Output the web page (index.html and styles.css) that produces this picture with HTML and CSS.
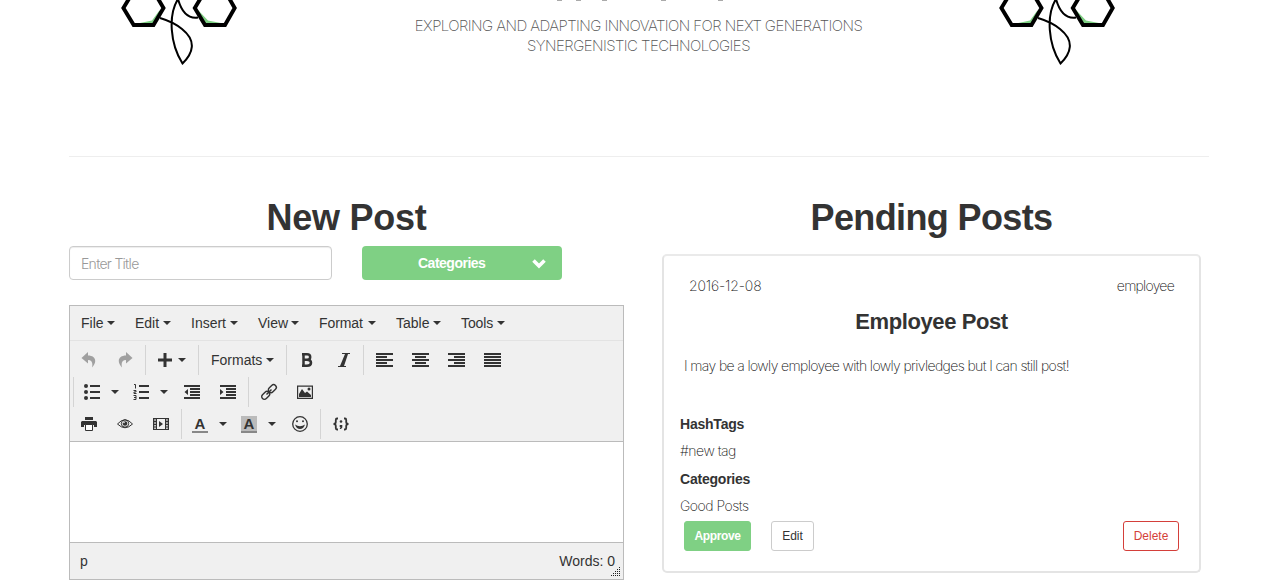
FILE: index.html
```html
<!DOCTYPE html>
<html lang="en">
<head>
<meta charset="utf-8">
<title>Posts</title>
<link rel="stylesheet" href="styles.css">
</head>
<body>
<svg width="0" height="0" class="defs">
  <symbol id="logo" viewBox="0 0 120 68">
    <path d="M15 24L32 20.500L39 11L43 9L33 25ZM106 24L88 20.500L78 10L74 9L84 25Z" fill="#7fd084"/>
    <path d="M3.400 8L13.700 -9H33.500L43.500 8L33.500 25H13.700ZM74.800 8L85 -9H105L114.700 8L105 25H85Z" fill="none" stroke="#000" stroke-width="3.900"/>
    <path d="M40 18C50 21 56 24 62 29C77 41 73 53 62.500 63.500C50 44 48 15 58 -1C61 10 67 19 78 17.500" fill="none" stroke="#000" stroke-width="2"/>
  </symbol>
</svg>
<div class="page">
  <header class="banner">
    <svg class="logo" width="120" height="68"><use href="#logo"/></svg>
    <div class="tagline">
      <svg class="title-edge" width="180" height="2"><path d="M8 .5h5M27 .5h5M53 .5h5M112 .5h5M169 .5h5" stroke="#aaa"/></svg>
      <p><span class="tag-a">EXPLORING AND ADAPTING INNOVATION FOR NEXT GENERATIONS</span><br><span class="tag-b">SYNERGENISTIC TECHNOLOGIES</span></p>
    </div>
    <svg class="logo" width="120" height="68"><use href="#logo"/></svg>
  </header>
  <main class="columns">
    <section class="new-post">
      <h2>New Post</h2>
      <div class="fields">
        <input class="title-input" type="text" placeholder="Enter Title">
        <button class="category"><span>Categories</span><svg width="14" height="10" viewBox="0 0 14 10"><path d="M1.500 1.500L7 7L12.500 1.500" fill="none" stroke="#fff" stroke-width="3.600"/></svg></button>
      </div>
      <div class="editor">
        <div class="menubar">
          <span class="menu m1">File<i class="caret"></i></span>
          <span class="menu m2">Edit<i class="caret"></i></span>
          <span class="menu m3">Insert<i class="caret"></i></span>
          <span class="menu m4">View<i class="caret"></i></span>
          <span class="menu m5">Format<i class="caret"></i></span>
          <span class="menu m6">Table<i class="caret"></i></span>
          <span class="menu m7">Tools<i class="caret"></i></span>
        </div>
        <div class="toolbar">
          <div class="row">
            <span class="btn off"><svg viewBox="0 0 16 16"><path d="M7 0L.5 6L7 11.500V8C11 8 12 11 11 15.500C17 9 14 3.500 7 3.500Z"/></svg></span>
            <span class="btn off"><svg viewBox="0 0 16 16"><path d="M9 0L15.500 6L9 11.500V8C5 8 4 11 5 15.500C-1 9 2 3.500 9 3.500Z"/></svg></span>
            <i class="sep"></i>
            <span class="btn split plus"><svg viewBox="0 0 16 16"><path d="M6.500 1h3v5.500H15v3H9.500V15h-3V9.500H1v-3h5.500z"/></svg><i class="caret"></i></span>
            <i class="sep"></i>
            <span class="btn formats">Formats<i class="caret"></i></span>
            <i class="sep"></i>
            <span class="btn"><svg viewBox="0 0 16 16"><path d="M4.500 2.200V13.800M3 2.200H8Q11.200 2.200 11.200 4.900T8 7.800H5M8 7.800Q12 7.800 12 10.800T8 13.800H3" fill="none" stroke="#333" stroke-width="2.500"/></svg></span>
            <span class="btn"><svg viewBox="0 0 16 16"><path d="M7 1h8v1h-2L9 14h2v1H3v-1h2L10 2H7z"/></svg></span>
            <i class="sep"></i>
            <span class="btn"><svg viewBox="0 0 17 16"><path d="M0 1h17v2H0zM0 4h11v2H0zM0 7h17v2H0zM0 10h11v2H0zM0 13h17v2H0z"/></svg></span>
            <span class="btn"><svg viewBox="0 0 17 16"><path d="M0 1h17v2H0zM3 4h11v2H3zM0 7h17v2H0zM3 10h11v2H3zM0 13h17v2H0z"/></svg></span>
            <span class="btn"><svg viewBox="0 0 17 16"><path d="M0 1h17v2H0zM6 4h11v2H6zM0 7h17v2H0zM6 10h11v2H6zM0 13h17v2H0z"/></svg></span>
            <span class="btn"><svg viewBox="0 0 17 16"><path d="M0 1h17v2H0zM0 4h17v2H0zM0 7h17v2H0zM0 10h17v2H0zM0 13h17v2H0z"/></svg></span>
          </div>
          <div class="row">
            <i class="sep"></i>
            <span class="btn split"><svg viewBox="0 0 16 16"><path d="M6 1h10v2H6zM6 7h10v2H6zM6 13h10v2H6z"/><circle cx="2" cy="2" r="2"/><circle cx="2" cy="8" r="2"/><circle cx="2" cy="14" r="2"/></svg><i class="caret"></i></span>
            <span class="btn split"><svg viewBox="0 0 16 16"><path d="M6 1h10v2H6zM6 7h10v2H6zM6 13h10v2H6z"/><path d="M1 .5h1.500V4.500M.5 6.500h2.500v1.500h-2v1.500H3.500M.5 11.500h2.500v4H.5M1 13.500h2" fill="none" stroke="#333"/></svg><i class="caret"></i></span>
            <span class="btn"><svg viewBox="0 0 16 16"><path d="M0 1h16v2H0zM6 4h10v2H6zM6 7h10v2H6zM6 10h10v2H6zM0 13h16v2H0zM4 5v6L.5 8z"/></svg></span>
            <span class="btn"><svg viewBox="0 0 16 16"><path d="M0 1h16v2H0zM6 4h10v2H6zM6 7h10v2H6zM6 10h10v2H6zM0 13h16v2H0zM0 5v6L3.500 8z"/></svg></span>
            <i class="sep"></i>
            <span class="btn"><svg viewBox="0 0 16 16"><g transform="rotate(-45 8 8)" fill="none" stroke="#333" stroke-width="1.400"><rect x="-1.200" y="5.300" width="9" height="5.400" rx="2.700"/><rect x="8.200" y="5.300" width="9" height="5.400" rx="2.700"/><path d="M4.500 8H11.500"/></g></svg></span>
            <span class="btn"><svg viewBox="0 0 16 16"><path d="M.6 2.100H15.400V14.400H.6Z" fill="none" stroke="#333" stroke-width="1.200"/><path d="M2 13V10L5 5L8 9L10 7.500L14 11V13Z"/><circle cx="12" cy="5" r="1.500"/></svg></span>
          </div>
          <div class="row">
            <span class="btn"><svg viewBox="0 0 16 16"><path d="M4 1h8v3H4zM1 5h14l1 1v5h-3V9H3v2H0V6z"/><path d="M4.500 8.500h7v6h-7z" fill="#fff" stroke="#333"/></svg></span>
            <span class="btn"><svg viewBox="0 0 16 16"><path d="M.5 8Q8 -.5 15.500 8Q8 15.500 .5 8Z" fill="none" stroke="#333"/><circle cx="8" cy="7.500" r="3.700" fill="none" stroke="#333"/><circle cx="8" cy="7.500" r="2.300"/><circle cx="7" cy="6.500" r=".8" fill="#eee"/></svg></span>
            <span class="btn"><svg viewBox="0 0 16 16"><path fill-rule="evenodd" d="M0 2h16v12H0zM1.300 3.300v1.500h1.500V3.300zM1.300 6.200v1.500h1.500V6.200zM1.300 9v1.500h1.500V9zM1.300 11.500V13h1.500v-1.500zM4 3v10h8V3zM13.200 3.300v1.500h1.500V3.300zM13.200 6.200v1.500h1.500V6.200zM13.200 9v1.500h1.500V9zM13.200 11.500V13h1.500v-1.500z"/><path d="M6 5v6l4-3z"/></svg></span>
            <i class="sep"></i>
            <span class="btn split"><b class="letter">A</b><i class="caret"></i></span>
            <span class="btn split"><b class="letter shade">A</b><i class="caret"></i></span>
            <span class="btn"><svg viewBox="0 0 16 16"><circle cx="8" cy="8" r="7.300" fill="none" stroke="#333" stroke-width="1.300"/><circle cx="5" cy="5.300" r="1"/><circle cx="11" cy="5.300" r="1"/><path d="M3 8.500Q8 12 13 8.500Q11.500 13 8 13T3 8.500Z"/></svg></span>
            <i class="sep"></i>
            <span class="btn"><svg viewBox="0 0 16 16"><path d="M5 2.500H4Q2.800 2.500 2.800 4V6Q2.800 8 .5 8Q2.800 8 2.800 10V12Q2.800 13.500 4 13.500H5M11 2.500h1Q13.200 2.500 13.200 4V6Q13.200 8 15.500 8Q13.200 8 13.200 10V12Q13.200 13.500 12 13.500H11" fill="none" stroke="#333" stroke-width="1.800"/><circle cx="8" cy="5.500" r="1.300"/><path d="M6.700 9h2.600v2.500L8 13H6.700L7.500 11H6.700z"/></svg></span>
          </div>
        </div>
        <div class="canvas"></div>
        <div class="status"><span>p</span><span class="words">Words: 0</span>
          <svg class="grip" width="10" height="10"><path d="M8 .5h1M6 2.500h1m1 0h1M4 4.500h1m1 0h1m1 0h1M2 6.500h1m1 0h1m1 0h1m1 0h1M0 8.500h1m1 0h1m1 0h1m1 0h1m1 0h1" stroke="#222"/></svg>
        </div>
      </div>
    </section>
    <section class="pending">
      <h2>Pending Posts</h2>
      <article class="card">
        <div class="meta"><span class="date">2016-12-08</span><span class="author">employee</span></div>
        <h3>Employee Post</h3>
        <p class="content">I may be a lowly employee with lowly privledges but I can still post!</p>
        <dl>
          <dt>HashTags</dt><dd class="tag">#new tag</dd>
          <dt>Categories</dt><dd class="cat">Good Posts</dd>
        </dl>
        <div class="actions"><button class="approve">Approve</button><button class="edit">Edit</button><button class="delete">Delete</button></div>
      </article>
    </section>
  </main>
</div>
</body>
</html>
```
FILE: styles.css
```css
* { box-sizing: border-box; }
body { margin: 0; height: 586px; overflow: hidden; background: #fff; color: #333; font: 14px/20px "Liberation Sans", Arial, sans-serif; }
.defs { display: block; }
.page { width: 1140px; margin-left: 69px; }
button, input { font: inherit; margin: 0; }
.banner { display: flex; justify-content: space-between; height: 157px; padding: 0 91px 0 51px; border-bottom: 1px solid #eee; }
.logo { flex: none; }
.tagline { width: 600px; margin-left: 39px; text-align: center; color: #555; }
.title-edge { display: block; margin: 0 auto; }
.tagline p { margin: 14px 0 0; font: 200 15px/20px Inter, sans-serif; }
.tag-a { letter-spacing: -.57px; }
.tag-b { letter-spacing: -.55px; }
.columns { display: flex; padding-top: 40px; }
.new-post { width: 555px; margin-right: 38px; }
.pending { width: 539px; }
h2 { margin: 0; height: 49px; font-size: 36px; line-height: 41px; font-weight: bold; text-align: center; letter-spacing: -.25px; }
.pending h2 { letter-spacing: -.62px; }
.fields { display: flex; gap: 30px; height: 59px; }
.title-input { width: 263px; height: 34px; padding: 1px 12px 0 11px; border: 1px solid #ccc; border-radius: 4px; box-shadow: inset 0 1px 1px rgba(0,0,0,.075); font: 300 14px/20px Inter, sans-serif; letter-spacing: -.72px; }
.title-input::placeholder { color: #999; opacity: 1; }
.category { display: flex; align-items: center; justify-content: space-between; width: 200px; height: 34px; padding: 0 16px 0 56px; border: 0; border-radius: 4px; background: #7fd084; color: #fff; font-weight: bold; letter-spacing: -.5px; }
.category svg { margin-top: 2px; }
.editor { border: 1px solid #bbb; background: #f0f0f0; height: 275px; }
.menubar { display: flex; gap: 20px; height: 35px; padding: 7px 11px 0; border-bottom: 1px solid #e3e3e3; }
.menu { display: flex; justify-content: space-between; height: 20px; align-items: center; }
.m1 { width: 34px; } .m2 { width: 36px; } .m3 { width: 47px; } .m4 { width: 41px; } .m5 { width: 57px; } .m6 { width: 45px; } .m7 { width: 44px; }
.m5, .m7 { letter-spacing: -.1px; }
.caret { flex: none; width: 8px; height: 4px; background: #333; clip-path: polygon(0 0, 100% 0, 50% 100%); }
.toolbar { height: 101px; padding: 3px 0 0 1px; border-bottom: 1px solid #bbb; }
.row { display: flex; height: 32px; align-items: center; }
.btn { flex: none; display: flex; align-items: center; justify-content: center; width: 36px; height: 30px; }
.btn svg { width: 16px; height: 16px; fill: #333; overflow: visible; }
.btn svg[viewBox="0 0 17 16"] { width: 17px; margin-left: 1px; }
.off { opacity: .42; }
.split { width: 49px; padding: 0 6px 0 8px; justify-content: space-between; }
.plus { width: 48px; padding: 0 10px 0 9px; }
.formats { width: 83px; padding: 0 10px; justify-content: space-between; }
.sep { flex: none; width: 1px; height: 30px; margin: 0 2px; background: #d4d4d4; }
.letter { width: 16px; height: 17px; border-bottom: 2px solid #888; text-align: center; font-size: 15px; line-height: 16px; }
.shade { background: #bbb; }
.canvas { height: 100px; background: #fff; }
.status { position: relative; display: flex; justify-content: space-between; height: 37px; padding: 8px 8px 0 10px; border-top: 1px solid #bbb; }
.grip { position: absolute; right: 2px; bottom: 2px; }
.card { height: 319px; margin-top: 8px; padding: 20px 20px 0 16px; border: 2px solid #e4e4e4; border-top-color: #eaeaea; border-radius: 5px; }
.meta { display: flex; justify-content: space-between; padding: 0 5px 0 9px; font: 200 14px/20px Inter, sans-serif; color: #111; }
.date { letter-spacing: -.15px; }
.author { letter-spacing: -.75px; }
h3 { margin: 12px 0 0; padding-left: 4px; font-size: 22px; line-height: 28px; text-align: center; letter-spacing: -.4px; }
.content { margin: 20px 0 0 4px; white-space: nowrap; color: #111; font: 200 14px/20px Inter, sans-serif; letter-spacing: -.62px; }
dl { margin: 38px 0 0; }
dt { height: 27px; font-weight: bold; letter-spacing: -.22px; }
dd { height: 28px; margin: 0; color: #111; font: 200 14px/20px Inter, sans-serif; letter-spacing: -.5px; }
.cat { height: 25px; }
.actions { display: flex; padding-left: 4px; }
.actions button { height: 30px; padding: 0; border: 1px solid #ccc; border-radius: 3px; background: #fff; color: #333; font-size: 12px; }
.actions .approve { width: 67px; margin-right: 20px; border-color: #7fd084; background: #7fd084; color: #fff; font-weight: bold; letter-spacing: -.35px; }
.actions .edit { width: 43px; }
.actions .delete { width: 56px; margin-left: auto; border-color: #d43f3a; color: #d43f3a; }
```
